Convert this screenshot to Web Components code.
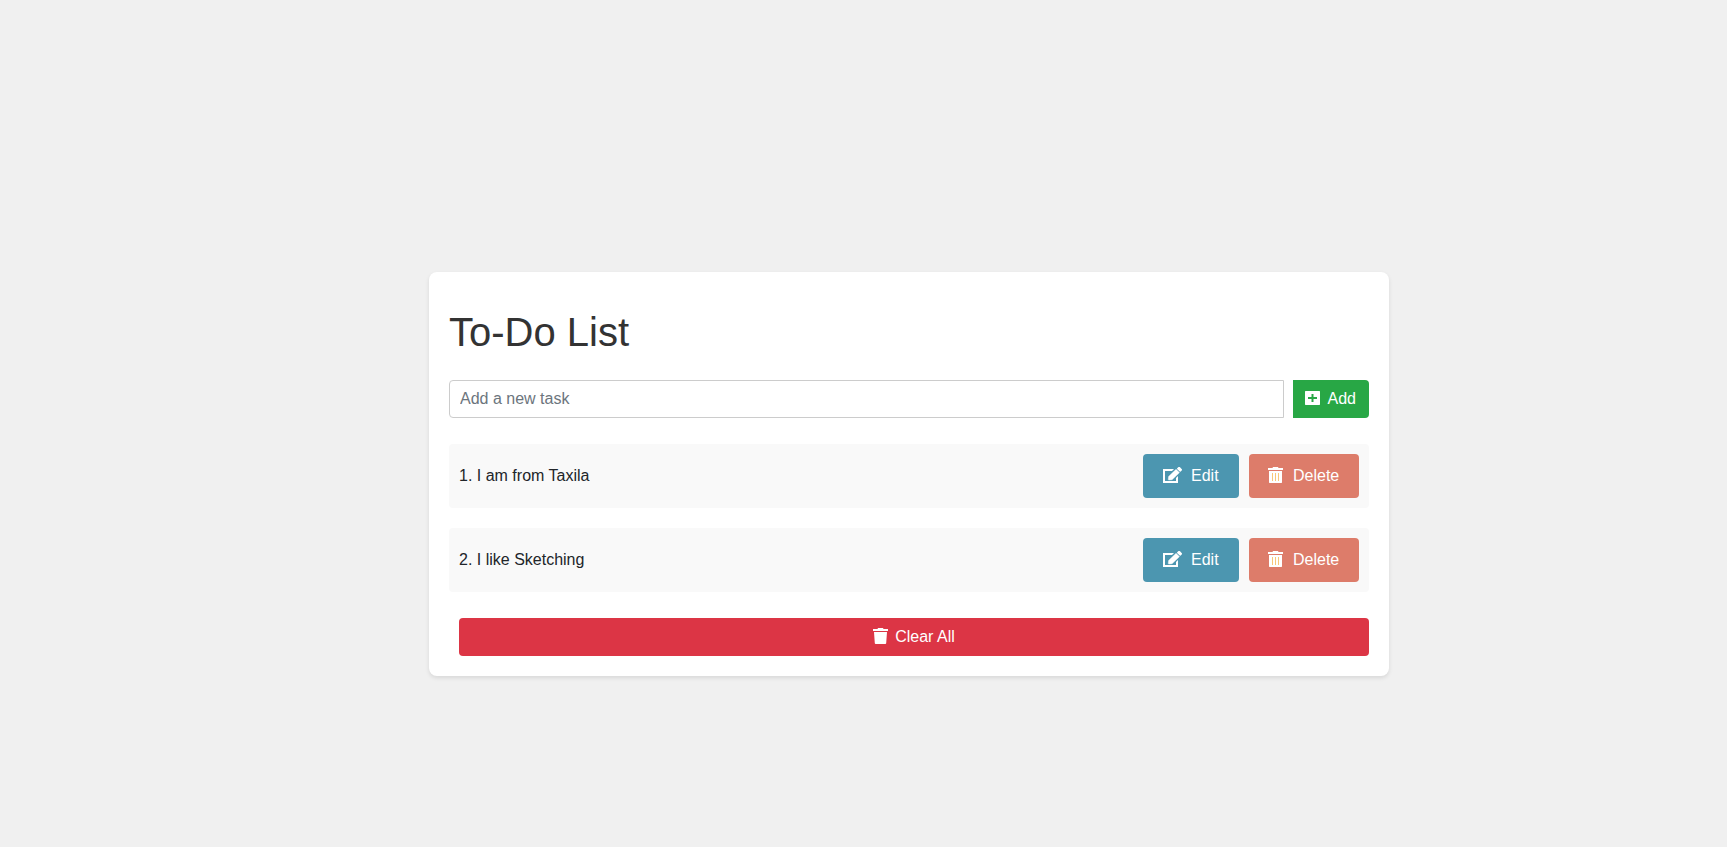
<!DOCTYPE html>
<html lang="en">
<head>
<meta charset="utf-8">
<title>To-Do List</title>
<style>
html, body { margin: 0; height: 100%; }
body { background: #f0f0f0; color: #212529; font: 16px/24px "Liberation Sans", Arial, sans-serif; overflow: hidden; }
</style>
</head>
<body>
<todo-app>
  <todo-input placeholder="Add a new task"></todo-input>
  <todo-item>1. I am from Taxila</todo-item>
  <todo-item>2. I like Sketching</todo-item>
  <todo-button slot="footer" kind="clear" icon="trash">Clear All</todo-button>
</todo-app>
<script>
/* name: [width in px, artwork on a 16px high grid] */
const ICONS = {
  edit: [19, '<path d="M0 2H11L9 4H2V14H13V11L15 9V16H0Z"/><path transform="scale(.033 .03125)" stroke="#fff" stroke-width="14" d="M402.6 83.2l90.2 90.2c3.8 3.8 3.8 10 0 13.8L274.4 405.6l-92.8 10.3c-12.4 1.4-22.9-9.1-21.5-21.5l10.3-92.8L388.8 83.2c3.8-3.8 10-3.8 13.8 0z"/><path transform="scale(.033 .03125)" d="M564.6 60.3l-48.8-48.8c-15.2-15.2-39.9-15.2-55.2 0l-35.4 35.4c-3.8 3.8-3.8 10 0 13.8l90.2 90.2c3.8 3.8 10 3.8 13.8 0l35.4-35.4c15.2-15.3 15.2-40 0-55.2z"/>'],
  bin: [15, '<path d="M5 0H10L10.5 1H15V3H0V1H4.5ZM1 4H14V15.5L13.5 16H1.5L1 15.5Z"/><path fill="#f9c878" d="M4 6h1v8h-1zM7 6h1v8h-1zM10 6h1v8h-1z"/>'],
  trash: [15, '<path d="M5 0H10L10.5 1H15V3H0V1H4.5ZM1 4H14L13.2 15.2Q13.1 16 12.3 16H2.7Q1.9 16 1.8 15.2Z"/>'],
  plus: [15, '<path fill-rule="evenodd" d="M.5 1H14.5L15 1.5V14.5L14.5 15H.5L0 14.5V1.5ZM6.5 4V7H3V9H6.5V12H8.5V9H12V7H8.5V4Z"/>']
};

class TodoButton extends HTMLElement {
  connectedCallback() {
    const [w, art] = ICONS[this.getAttribute('icon')];
    this.attachShadow({ mode: 'open' }).innerHTML = `
      <style>
        :host { display: block; flex: none; height: 44px; color: #fff; }
        button { all: unset; box-sizing: border-box; display: flex; align-items: center; width: 100%; height: 100%;
          padding: 0 20px; gap: 9px; border-radius: 4px; background: #4c96b0; color: inherit; white-space: nowrap; }
        svg { flex: none; height: 16px; margin-bottom: 2px; fill: #fff; }
        :host([kind=edit]) { width: 96px; }
        :host([kind=delete]) { width: 110px; }
        :host([kind=delete]) button { background: #dd7c6a; padding: 0 0 0 19px; gap: 10px; }
        :host([kind=add]) { width: 76px; height: 38px; }
        :host([kind=add]) button { background: #28a745; padding: 0 12px; gap: 7.5px; border-radius: 0 4px 4px 0; }
        :host([kind=clear]) { height: 38px; margin: 26px 0 0 10px; }
        :host([kind=clear]) button { background: #dc3545; justify-content: center; gap: 7px; }
      </style>
      <button><svg width="${w}" viewBox="0 0 ${w} 16">${art}</svg><span><slot></slot></span></button>`;
  }
}

class TodoInput extends HTMLElement {
  connectedCallback() {
    this.attachShadow({ mode: 'open' }).innerHTML = `
      <style>
        :host { display: flex; gap: 9px; margin-bottom: 26px; }
        input { box-sizing: border-box; flex: 1; min-width: 0; height: 38px; margin: 0; padding: 0 10px;
          border: 1px solid #ccc; border-radius: 4px 0 0 4px; background: #fff; font: inherit; color: #495057; outline: 0; }
        input::placeholder { color: #6c757d; opacity: 1; }
      </style>
      <input type="text" placeholder="${this.getAttribute('placeholder')}">
      <todo-button kind="add" icon="plus">Add</todo-button>`;
  }
}

class TodoItem extends HTMLElement {
  connectedCallback() {
    this.attachShadow({ mode: 'open' }).innerHTML = `
      <style>
        :host { display: flex; align-items: center; gap: 10px; padding: 10px; background: #f9f9f9; border-radius: 4px; }
        :host(:not(:last-of-type)) { margin-bottom: 20px; }
        .label { flex: 1; }
      </style>
      <span class="label"><slot></slot></span>
      <todo-button kind="edit" icon="edit">Edit</todo-button>
      <todo-button kind="delete" icon="bin">Delete</todo-button>`;
  }
}

class TodoApp extends HTMLElement {
  connectedCallback() {
    this.attachShadow({ mode: 'open' }).innerHTML = `
      <style>
        :host { display: flow-root; }
        main { box-sizing: border-box; width: 960px; height: 404px; margin: 272px 0 0 429px; padding: 36px 20px 20px;
          background: #fff; border-radius: 8px; box-shadow: 0 2px 4px rgba(0,0,0,.1); }
        h1 { margin: 0 0 24px; font-size: 40px; line-height: 48px; font-weight: 400; color: #333; }
      </style>
      <main>
        <h1>To-Do List</h1>
        <slot></slot>
        <slot name="footer"></slot>
      </main>`;
  }
}

customElements.define('todo-button', TodoButton);
customElements.define('todo-input', TodoInput);
customElements.define('todo-item', TodoItem);
customElements.define('todo-app', TodoApp);
</script>
</body>
</html>
